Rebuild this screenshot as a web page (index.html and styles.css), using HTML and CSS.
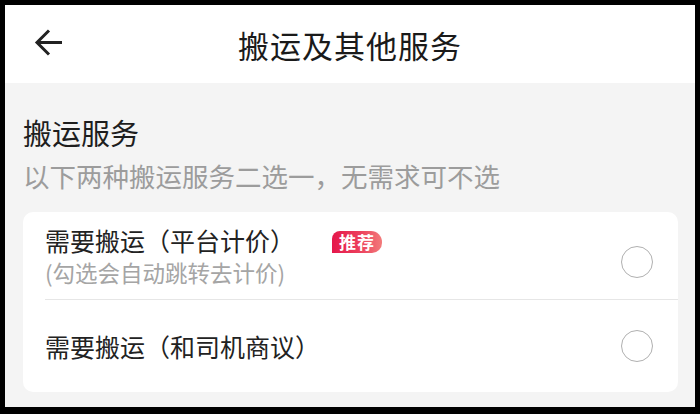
FILE: index.html
```html
<!DOCTYPE html>
<html lang="zh-CN">
<head>
  <meta charset="UTF-8">
  <meta name="viewport" content="width=device-width, initial-scale=1.0">
  <title>搬运及其他服务</title>
  <link rel="stylesheet" href="styles.css">
</head>
<body>

  <div class="screen">
    <header class="topbar">
      <button class="back-btn" aria-label="返回">
        <svg width="30" height="30" viewBox="0 0 30 30">
          <path d="M28 14.5 H3 M15 2.5 L3 14.5 L15 26.5" fill="none" stroke="#222" stroke-width="3" stroke-linecap="butt" stroke-linejoin="miter"/>
        </svg>
      </button>
      <h1 class="topbar-title">搬运及其他服务</h1>
    </header>

    <main class="content">
      <h2 class="section-title">搬运服务</h2>
      <p class="section-hint">以下两种搬运服务二选一，无需求可不选</p>

      <div class="option-card">
        <label class="option-row first">
          <div class="option-text">
            <div class="option-name">需要搬运（平台计价）<span class="badge">推荐</span></div>
            <div class="option-note">(勾选会自动跳转去计价)</div>
          </div>
          <span class="radio"></span>
        </label>
        <label class="option-row">
          <div class="option-text">
            <div class="option-name">需要搬运（和司机商议）</div>
          </div>
          <span class="radio"></span>
        </label>
      </div>
    </main>
  </div>

</body>
</html>
```

FILE: styles.css
```css
html, body {
  margin: 0;
  padding: 0;
}

body {
  background: #000;
  padding: 5px 5px 7px 5px;
  font-family: "Noto Sans CJK SC", "Noto Sans", sans-serif;
  color: #222;
}

.screen {
  width: 690px;
  height: 402px;
  background: #f4f4f4;
  overflow: hidden;
  display: flex;
  flex-direction: column;
}

/* Top bar */
.topbar {
  height: 78px;
  background: #fff;
  position: relative;
  display: flex;
  align-items: center;
  justify-content: center;
}

.back-btn {
  position: absolute;
  left: 29px;
  top: 23px;
  padding: 0;
  border: none;
  background: none;
  line-height: 0;
}

.topbar-title {
  margin: 0;
  font-size: 31px;
  font-weight: 400;
  letter-spacing: 1px;
  color: #1a1a1a;
}

/* Content */
.content {
  padding: 31px 17px 0 18px;
}

.section-title {
  margin: 0;
  font-size: 29px;
  font-weight: 400;
  line-height: 36px;
  color: #1e1e1e;
}

.section-hint {
  margin: 10px 0 0;
  font-size: 26.5px;
  line-height: 32px;
  color: #9c9c9c;
}

.option-card {
  margin-top: 20px;
  background: #fff;
  border-radius: 10px;
}

.option-row {
  display: flex;
  align-items: center;
  justify-content: space-between;
  height: 92px;
  margin-left: 22px;
  padding-right: 25px;
}

.option-row.first {
  box-sizing: border-box;
  height: 88px;
  align-items: flex-start;
  padding-top: 12px;
  border-bottom: 1px solid #e6e6e6;
}

.option-row.first .radio {
  align-self: center;
}

.option-name {
  font-size: 25px;
  line-height: 32px;
  color: #222;
  display: flex;
  align-items: center;
}

.option-note {
  font-size: 22.5px;
  line-height: 28px;
  color: #a5a5a5;
  margin-top: 2px;
}

.badge {
  margin-left: 37px;
  margin-top: 4px;
  height: 22px;
  padding: 0 7px;
  font-size: 17px;
  line-height: 22px;
  font-weight: 700;
  color: #fff;
  background: linear-gradient(90deg, #e5174b 0%, #ec3f5c 55%, #f27b7b 100%);
  border-radius: 8px 11px 10px 0;
  letter-spacing: 1px;
}

.radio {
  width: 30px;
  height: 30px;
  border: 1.5px solid #b0b0b0;
  border-radius: 50%;
  flex-shrink: 0;
}
```
